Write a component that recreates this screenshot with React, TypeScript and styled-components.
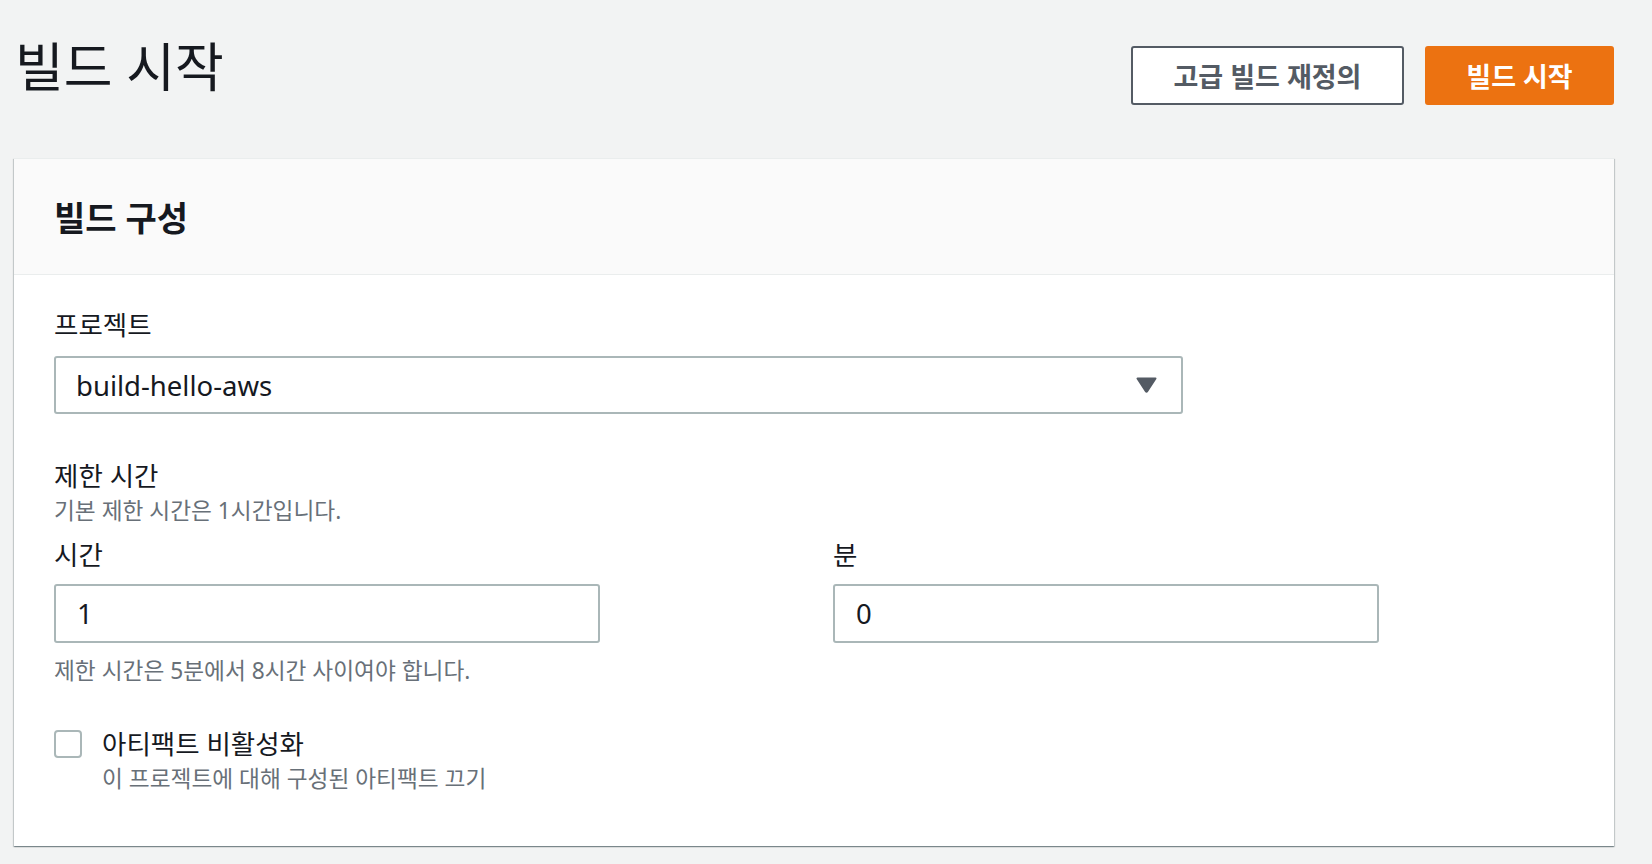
import React from "react";
import styled, { createGlobalStyle } from "styled-components";

const GlobalStyle = createGlobalStyle`
  html, body {
    margin: 0;
    padding: 0;
    background: #f2f3f3;
  }
  body {
    font-family: "Noto Sans", "Noto Sans CJK KR", sans-serif;
    color: #16191f;
  }
  * { box-sizing: border-box; }
`;

const Page = styled.div`
  width: 1652px;
  height: 864px;
  padding: 0 38px 0 14px;
  overflow: hidden;
`;

const TopBar = styled.div`
  display: flex;
  justify-content: space-between;
  align-items: flex-start;
  height: 158px;
`;

const PageTitle = styled.h1`
  margin: 35px 0 0 1px;
  font-size: 53px;
  font-weight: 400;
  line-height: 64px;
  color: #16191f;
`;

const Actions = styled.div`
  display: flex;
  gap: 21px;
  margin-top: 46px;
`;

const Button = styled.button<{ $primary?: boolean }>`
  height: 59px;
  padding: 0 30px;
  min-width: ${(p) => (p.$primary ? "189px" : "273px")};
  border-radius: 3px;
  border: 2px solid ${(p) => (p.$primary ? "#ec7211" : "#545b64")};
  background: ${(p) => (p.$primary ? "#ec7211" : "#ffffff")};
  color: ${(p) => (p.$primary ? "#ffffff" : "#545b64")};
  font-family: inherit;
  font-size: 27px;
  font-weight: 700;
  cursor: pointer;
`;

const Card = styled.section`
  background: #ffffff;
  border-top: 1px solid #eaeded;
  box-shadow: 0 1px 1px 0 rgba(0, 28, 36, 0.3), 1px 1px 1px 0 rgba(0, 28, 36, 0.15),
    -1px 1px 1px 0 rgba(0, 28, 36, 0.15);
  height: 688px;
`;

const CardHeader = styled.div`
  background: #fafafa;
  border-bottom: 1px solid #eaeded;
  height: 116px;
  display: flex;
  align-items: center;
  padding: 0 40px;
`;

const CardTitle = styled.h2`
  margin: 0;
  font-size: 34px;
  font-weight: 700;
  color: #16191f;
`;

const CardBody = styled.div`
  padding: 32px 40px 0 40px;
  display: flex;
  flex-direction: column;
`;

const Field = styled.div<{ $mb?: number }>`
  display: flex;
  flex-direction: column;
  margin-bottom: ${(p) => p.$mb ?? 0}px;
`;

const Label = styled.label`
  font-size: 26.5px;
  line-height: 36px;
  color: #16191f;
`;

const Description = styled.div<{ $mt?: number }>`
  margin-top: ${(p) => p.$mt ?? 1}px;
  font-size: 22.7px;
  line-height: 32px;
  color: #687078;
`;

const SelectBox = styled.div`
  margin-top: 13px;
  width: 1129px;
  height: 58px;
  border: 2px solid #aab7b8;
  border-radius: 3px;
  display: flex;
  align-items: center;
  justify-content: space-between;
  padding: 0 24px 0 20px;
  font-size: 27.5px;
  color: #16191f;
`;

const Grid = styled.div`
  display: grid;
  grid-template-columns: 779px 1fr;
  margin-top: 10px;
`;

const TextInput = styled.div`
  margin-top: 11px;
  width: 546px;
  height: 59px;
  border: 2px solid #aab7b8;
  border-radius: 3px;
  display: flex;
  align-items: center;
  padding: 0 21px;
  font-size: 27.5px;
  color: #16191f;
`;

const CheckRow = styled.div`
  display: flex;
  gap: 20px;
  align-items: flex-start;
  margin-top: 39px;
`;

const CheckBox = styled.span`
  margin-top: 4px;
  width: 28px;
  height: 28px;
  border: 2px solid #aab7b8;
  border-radius: 4px;
  background: #fff;
  flex: none;
`;

const CheckText = styled.div`
  display: flex;
  flex-direction: column;
`;

export default function App() {
  return (
    <>
      <GlobalStyle />
      <Page>
        <TopBar>
          <PageTitle>빌드 시작</PageTitle>
          <Actions>
            <Button>고급 빌드 재정의</Button>
            <Button $primary>빌드 시작</Button>
          </Actions>
        </TopBar>
        <Card>
          <CardHeader>
            <CardTitle>빌드 구성</CardTitle>
          </CardHeader>
          <CardBody>
            <Field $mb={44}>
              <Label>프로젝트</Label>
              <SelectBox>
                <span>build-hello-aws</span>
                <svg width="21" height="16" viewBox="0 0 21 16">
                  <path d="M1.5 1.5 H19.5 L11.2 14.2 Q10.5 15.2 9.8 14.2 Z" fill="#545b64" stroke="#545b64" strokeWidth="2" strokeLinejoin="round" />
                </svg>
              </SelectBox>
            </Field>
            <Field>
              <Label>제한 시간</Label>
              <Description>기본 제한 시간은 1시간입니다.</Description>
            </Field>
            <Grid>
              <Field>
                <Label>시간</Label>
                <TextInput>1</TextInput>
              </Field>
              <Field>
                <Label>분</Label>
                <TextInput>0</TextInput>
              </Field>
            </Grid>
            <Description $mt={12}>제한 시간은 5분에서 8시간 사이여야 합니다.</Description>
            <CheckRow>
              <CheckBox />
              <CheckText>
                <Label>아티팩트 비활성화</Label>
                <Description>이 프로젝트에 대해 구성된 아티팩트 끄기</Description>
              </CheckText>
            </CheckRow>
          </CardBody>
        </Card>
      </Page>
    </>
  );
}
